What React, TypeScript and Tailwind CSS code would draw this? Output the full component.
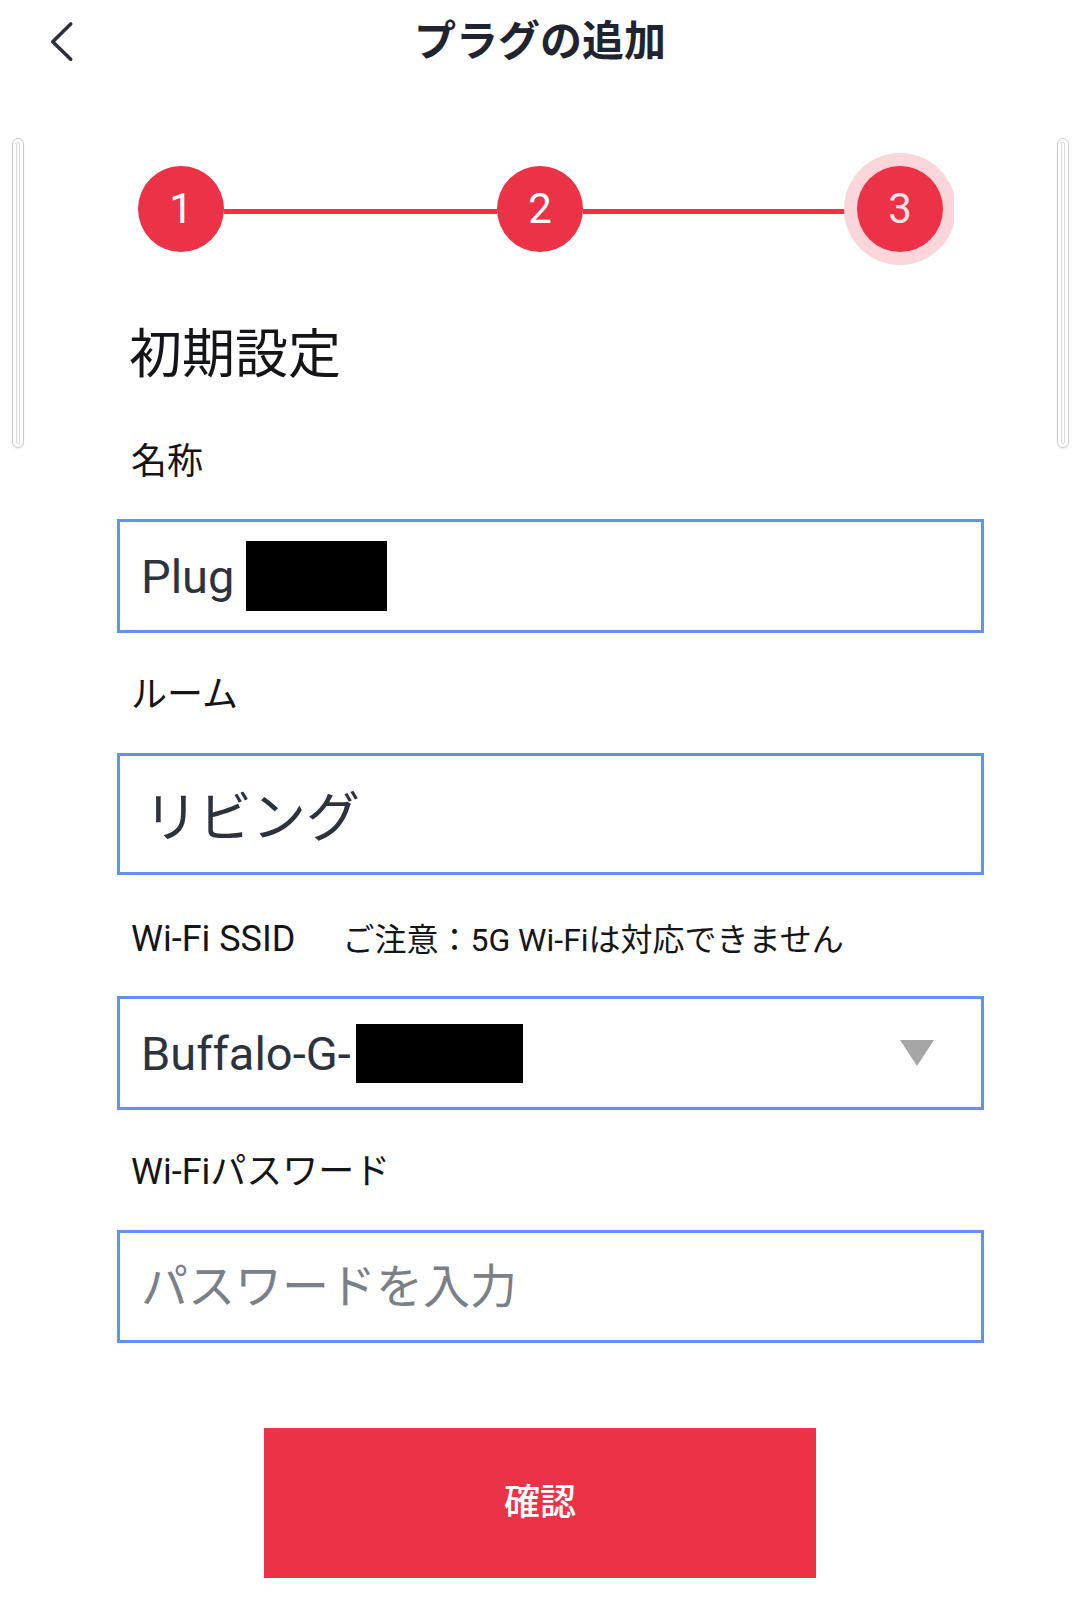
import type { ReactNode } from 'react';

const RED = 'bg-[#ec3246]';

function EdgeBar({ side }: { side: 'left' | 'right' }) {
  // overscroll edge indicator at the page sides
  return (
    <div
      className={`absolute top-[138px] h-[310px] w-[12px] rounded-full border border-[#cbcbcb] bg-white p-[3px] shadow-[0_1px_2px_rgba(0,0,0,0.08)] ${
        side === 'left' ? 'left-[12px]' : 'left-[1057px]'
      }`}
    >
      <div className="h-full w-full rounded-full border border-[#dadada]" />
    </div>
  );
}

function Step({ n, current }: { n: number; current?: boolean }) {
  return (
    <div
      className={`flex h-[86px] w-[86px] shrink-0 items-center justify-center rounded-full ${RED} text-[42px] leading-none ${
        current ? 'text-[#fde2e5] ring-[13px] ring-[#fad5d9]' : 'text-white'
      }`}
    >
      {n}
    </div>
  );
}

function Label({ children, className = '' }: { children: ReactNode; className?: string }) {
  return (
    <div className={`flex h-[36px] items-baseline text-[36px] leading-[36px] text-[#141519] ${className}`}>
      {children}
    </div>
  );
}

function Field({ children, className = '' }: { children: ReactNode; className?: string }) {
  return (
    <div
      className={`flex w-[867px] items-center border-[3px] border-[#6292ee] bg-white px-[21px] ${className}`}
    >
      {children}
    </div>
  );
}

export default function App() {
  return (
    <div
      className="relative h-[1620px] w-[1080px] overflow-hidden bg-white"
      style={{ fontFamily: 'Roboto, "Noto Sans CJK JP", sans-serif' }}
    >
      <header className="grid h-[84px] grid-cols-[1fr_auto_1fr] items-center">
        <div className="pl-[40px]">
          <svg width="44" height="60" viewBox="0 0 44 60" fill="none">
            <polyline
              points="30.7,12 12.7,29.7 30.7,47.3"
              stroke="#2b303a"
              strokeWidth="3.6"
              strokeLinecap="round"
              strokeLinejoin="round"
            />
          </svg>
        </div>
        <h1 className="text-[42px] font-bold leading-none text-[#1f2430]">プラグの追加</h1>
        <div />
      </header>

      <EdgeBar side="left" />
      <EdgeBar side="right" />

      <div className="ml-[117px] mt-[69px] w-[837px] overflow-hidden py-[13px]">
        <div className="flex items-center pl-[21px]">
          <Step n={1} />
          <div className={`mt-[5px] h-[5px] w-[273px] ${RED}`} />
          <Step n={2} />
          <div className={`mt-[5px] h-[5px] w-[274px] ${RED}`} />
          <Step n={3} current />
        </div>
      </div>

      <div className="ml-[117px]">
        <h2 className="mt-[64px] h-[52px] pl-[12px] text-[53px] leading-[52px] text-[#141519]">初期設定</h2>

        <Label className="mt-[63px] pl-[14px]">名称</Label>
        <Field className="mt-[39px] h-[114px]">
          <span className="text-[47px] leading-none text-[#2d333d]">Plug&nbsp;</span>
          <span className="inline-block h-[70px] w-[141px] bg-black" />
        </Field>

        <Label className="mt-[44px] pl-[14px]">ルーム</Label>
        <Field className="mt-[40px] h-[122px]">
          <span className="pl-[3px] pt-[10px] text-[54px] leading-none text-[#2d333d]">リビング</span>
        </Field>

        <Label className="mt-[46px] pl-[14px]">
          <span>Wi-Fi SSID</span>
          <span className="ml-[47px] text-[32px]">ご注意：5G Wi-Fiは対応できません</span>
        </Label>
        <Field className="mt-[39px] h-[114px]">
          <span className="text-[47px] leading-none text-[#2d333d]">Buffalo-G-</span>
          <span className="ml-[5px] inline-block h-[59px] w-[167px] bg-black" />
          <svg className="ml-auto mr-[26px]" width="34" height="26" viewBox="0 0 34 26">
            <polygon points="0,0 34,0 17,26" fill="#a6a6a6" />
          </svg>
        </Field>

        <Label className="mt-[44px] pl-[14px]">Wi-Fiパスワード</Label>
        <Field className="mt-[40px] h-[113px]">
          <input
            className="w-full bg-transparent text-[47px] leading-none text-[#2d333d] outline-none placeholder:text-[#7b8088]"
            placeholder="パスワードを入力"
          />
        </Field>
      </div>

      <button
        className={`ml-[264px] mt-[85px] flex h-[150px] w-[552px] items-center justify-center ${RED} text-[36px] font-medium text-white`}
      >
        確認
      </button>
    </div>
  );
}
